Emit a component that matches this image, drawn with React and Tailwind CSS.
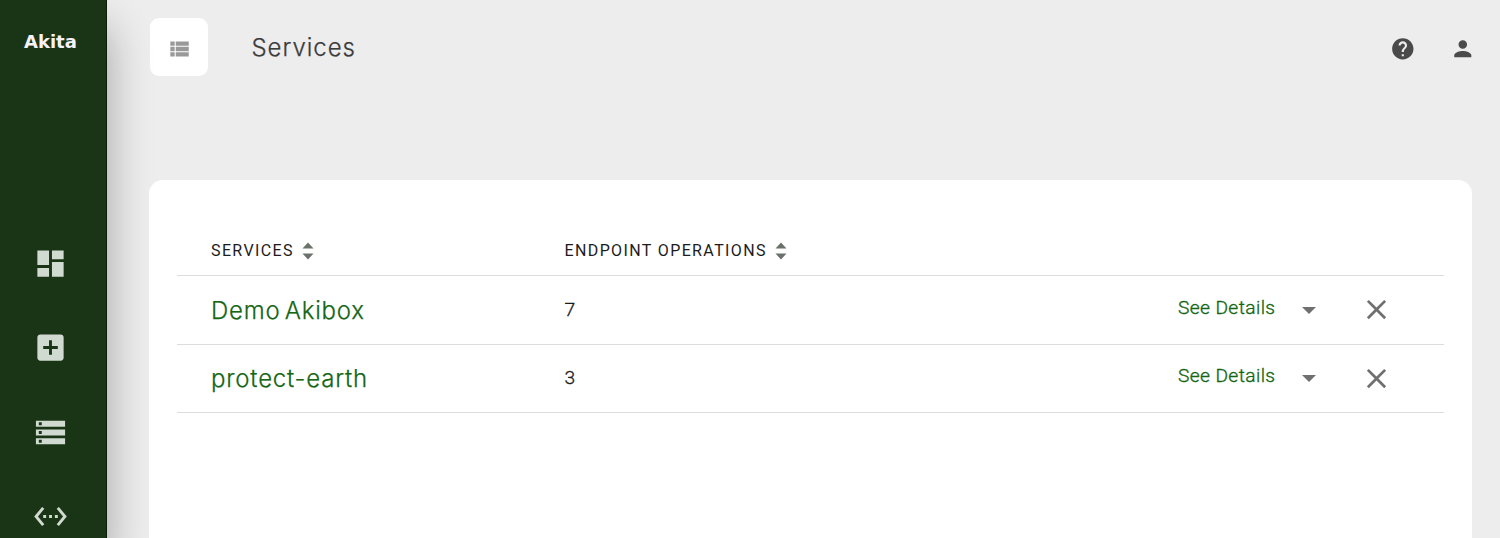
const PATHS = {
  dashboard: "M3 13h8V3H3v10zm0 8h8v-6H3v6zm10 0h8V11h-8v10zm0-18v6h8V3h-8z",
  add: "M19 3H5c-1.11 0-2 .9-2 2v14c0 1.1.89 2 2 2h14c1.1 0 2-.9 2-2V5c0-1.1-.9-2-2-2zm-2 10h-4v4h-2v-4H7v-2h4V7h2v4h4v2z",
  storage: "M2 20h20v-4H2v4zm2-3h2v2H4v-2zM2 4v4h20V4H2zm4 3H4V5h2v2zm-4 7h20v-4H2v4zm2-3h2v2H4v-2z",
  ethernet: "M7.77 6.76L6.23 5.48.82 12l5.41 6.52 1.54-1.28L3.42 12l4.35-5.24zM7 13h2v-2H7v2zm10-2h-2v2h2v-2zm-6 2h2v-2h-2v2zm6.77-7.52l-1.54 1.28L20.58 12l-4.35 5.24 1.54 1.28L23.18 12l-5.41-6.52z",
  list: "M4 14h4v-4H4v4zm0 5h4v-4H4v4zM4 9h4V5H4v4zm5 5h12v-4H9v4zm0 5h12v-4H9v4zM9 5v4h12V5H9z",
  help: "M12 2C6.48 2 2 6.48 2 12s4.48 10 10 10 10-4.48 10-10S17.52 2 12 2zm1 17h-2v-2h2v2zm2.07-7.75l-.9.92C13.45 12.9 13 13.5 13 15h-2v-.5c0-1.1.45-2.1 1.17-2.83l1.24-1.26c.37-.36.59-.86.59-1.41 0-1.1-.9-2-2-2s-2 .9-2 2H8c0-2.21 1.79-4 4-4s4 1.79 4 4c0 .88-.36 1.68-.93 2.25z",
  person: "M12 12c2.21 0 4-1.79 4-4s-1.79-4-4-4-4 1.79-4 4 1.79 4 4 4zm0 2c-2.67 0-8 1.34-8 4v2h16v-2c0-2.66-5.33-4-8-4z",
  close: "M19 6.41L17.59 5 12 10.59 6.41 5 5 6.41 10.59 12 5 17.59 6.41 19 12 13.41 17.59 19 19 17.59 13.41 12z",
};

function Icon({ name, className }) {
  return (
    <svg viewBox="0 0 24 24" fill="currentColor" className={className} aria-hidden="true">
      <path d={PATHS[name]} />
    </svg>
  );
}

function SortIcon() {
  return (
    <svg viewBox="0 0 12 18" className="h-[18px] w-3 text-[#6b716b]" fill="currentColor" aria-hidden="true">
      <path d="M6 0.5L11.5 6.5H0.5zM6 17.5L0.5 11.5H11.5z" />
    </svg>
  );
}

const NAV = ["dashboard", "add", "storage", "ethernet"];
const SERVICES = [
  { name: "Demo Akibox", operations: 7 },
  { name: "protect-earth", operations: 3 },
];

function Sidebar() {
  return (
    <aside className="z-10 flex h-full w-[106.5px] shrink-0 flex-col border-r border-[#0c1d0b] bg-[#193515] shadow-[0_28px_44px_rgba(0,0,0,0.32)]">
      <div className="flex h-[82px] items-center pl-6 font-['DejaVu_Sans',sans-serif] text-[18px] font-bold text-[#f6f2f8]">
        Akita
      </div>
      <nav className="mt-[164px] flex flex-col gap-[49.3px] pl-[33px] text-[#d1dad0]">
        {NAV.map((name) => (
          <Icon key={name} name={name} className="size-[35px] shrink-0" />
        ))}
      </nav>
    </aside>
  );
}

function Header() {
  return (
    <header className="flex h-[58px] items-center pr-6">
      <button className="flex size-[58px] items-center justify-center rounded-[9px] bg-white pt-1 text-[#999]">
        <Icon name="list" className="size-[26px]" />
      </button>
      <h1 className="ml-[43.5px] pt-0.5 font-[Inter,sans-serif] text-[24px] leading-8 font-light tracking-[0.95px] text-[#3c3c3c] [-webkit-text-stroke:0.25px]">
        Services
      </h1>
      <div className="ml-auto flex gap-[34.5px] pt-1 text-[#4a4a4a]">
        <Icon name="help" className="size-[25.6px]" />
        <Icon name="person" className="size-[25.6px]" />
      </div>
    </header>
  );
}

function ServiceRow({ name, operations }) {
  return (
    <div className="grid h-[68.5px] grid-cols-[353.5px_1fr_auto] items-center border-b border-[#dcdcdc] pr-[51px] pl-[34px]">
      <a className="pt-0.5 font-[Inter,sans-serif] text-[24px] leading-8 font-light tracking-[0.82px] text-[#146614] [-webkit-text-stroke:0.25px] [word-spacing:-3.5px]">
        {name}
      </a>
      <span className="font-[Roboto,sans-serif] text-[19.2px] leading-6 font-light text-[#1c1c1c] [-webkit-text-stroke:0.35px]">
        {operations}
      </span>
      <div className="flex items-center">
        <span className="pb-1 font-[Roboto,sans-serif] text-[19.2px] leading-6 font-light tracking-[0.4px] text-[#146614] [-webkit-text-stroke:0.35px]">
          See Details
        </span>
        <svg viewBox="0 0 14 7" className="mt-px ml-[26.5px] h-[7px] w-3.5 text-[#707070]" fill="currentColor" aria-hidden="true">
          <path d="M0 0H14L7 7z" />
        </svg>
        <Icon name="close" className="ml-[44px] size-[33px] text-[#707070]" />
      </div>
    </div>
  );
}

export default function App() {
  return (
    <div className="flex h-[538px] w-full overflow-hidden bg-[#ededed]">
      <Sidebar />
      <main className="flex min-w-0 flex-1 flex-col pt-[18px] pl-[43.5px]">
        <Header />
        <section className="z-20 mt-[104px] mr-7 -ml-px flex-1 rounded-t-[14px] bg-white px-7 pt-[45px]">
          <div className="grid h-[51px] grid-cols-[353.5px_1fr] items-center border-b border-[#dcdcdc] pt-[1.5px] pl-[34px] font-[Roboto,sans-serif] text-[16px] leading-5 tracking-[1.38px] text-[#1c1c1c]">
            <div className="flex items-center gap-2">
              SERVICES
              <SortIcon />
            </div>
            <div className="flex items-center gap-2">
              ENDPOINT OPERATIONS
              <SortIcon />
            </div>
          </div>
          {SERVICES.map((service) => (
            <ServiceRow key={service.name} {...service} />
          ))}
        </section>
      </main>
    </div>
  );
}
